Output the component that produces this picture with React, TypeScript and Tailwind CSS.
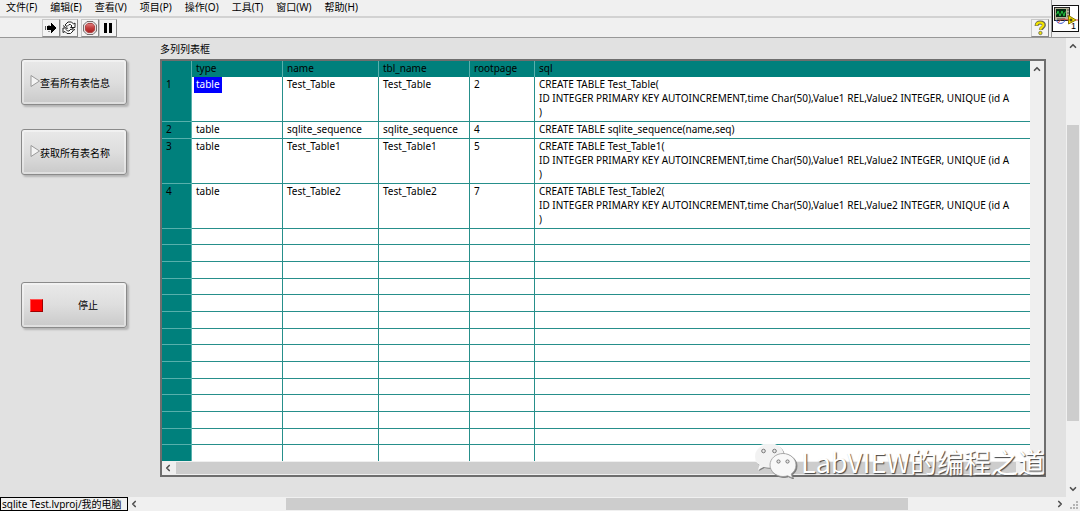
import type { ReactNode } from 'react';
import { ChevronDown, ChevronLeft, ChevronRight, ChevronUp } from 'lucide-react';

interface TableRow {
  type: string;
  name: string;
  tblName: string;
  rootpage: number;
  sql: string;
}

const MENUS = ['文件(F)', '编辑(E)', '查看(V)', '项目(P)', '操作(O)', '工具(T)', '窗口(W)', '帮助(H)'];

const COLUMNS = ['type', 'name', 'tbl_name', 'rootpage', 'sql'];

const createSql = (table: string) =>
  `CREATE TABLE ${table}(\nID INTEGER PRIMARY KEY AUTOINCREMENT,time Char(50),Value1 REL,Value2 INTEGER, UNIQUE (id A\n)`;

const ROWS: TableRow[] = [
  { type: 'table', name: 'Test_Table', tblName: 'Test_Table', rootpage: 2, sql: createSql('Test_Table') },
  {
    type: 'table',
    name: 'sqlite_sequence',
    tblName: 'sqlite_sequence',
    rootpage: 4,
    sql: 'CREATE TABLE sqlite_sequence(name,seq)',
  },
  { type: 'table', name: 'Test_Table1', tblName: 'Test_Table1', rootpage: 5, sql: createSql('Test_Table1') },
  { type: 'table', name: 'Test_Table2', tblName: 'Test_Table2', rootpage: 7, sql: createSql('Test_Table2') },
];

const EMPTY_ROWS = Array.from({ length: 14 }, (_, index) => index);

const RunIcon = () => (
  <svg viewBox="0 0 16 16" className="w-4 h-4" shapeRendering="crispEdges">
    <path d="M4 6h4V3h1v1h1v1h1v1h1v1h1v2h-1v1h-1v1h-1v1H9v1H8v-3H4z" fill="#000" />
    <path d="M2 6h1v4H2z" fill="#555" />
    <path d="M5 5h2M5 11h2" stroke="#999" />
  </svg>
);

const RunLoopIcon = () => (
  <svg viewBox="0 0 16 16" className="w-4 h-4" fill="#fff" stroke="#222" strokeWidth="1">
    <path d="M4 5l3-3h3.500l2 2L14 3v4.500h-4.500L11 6 9.500 4.500H8L6 6.500z" />
    <path d="M12.500 10.500l-3 3H6l-2-2-2 1V8h4.500L5 9.500 6.500 11H8l2-2z" />
    <path d="M2 5.500l2.500 2M14 10l-3-2" />
  </svg>
);

const AbortIcon = () => (
  <svg viewBox="0 0 16 16" className="w-4 h-4">
    <defs>
      <linearGradient id="abort-red" x1="0" y1="0" x2="0" y2="1">
        <stop offset="0" stopColor="#e08080" />
        <stop offset="0.5" stopColor="#c43c3c" />
        <stop offset="1" stopColor="#a82020" />
      </linearGradient>
    </defs>
    <path d="M5 1.500h6L14.500 5v6L11 14.500H5L1.500 11V5z" fill="#e4dcdc" stroke="#776c6c" strokeWidth="1" />
    <path d="M5.800 3.500h4.400l2.300 2.300v4.400l-2.300 2.300H5.800l-2.300-2.300V5.800z" fill="url(#abort-red)" stroke="#b04848" />
  </svg>
);

const PauseIcon = () => (
  <svg viewBox="0 0 16 16" className="w-4 h-4">
    <path d="M4 3h3v10H4zM9 3h3v10H9z" fill="#000" />
  </svg>
);

const HelpIcon = () => (
  <svg viewBox="0 0 16 16" className="w-4 h-4" fill="none">
    <path d="M4.500 6C4.500 3 6 2.500 8 2.500s4 .8 4 2.800S8.700 7.500 8.700 10" stroke="#66665a" strokeWidth="3.800" />
    <path d="M4.500 5.500C4.500 3 6 2.500 8 2.500s3.500.8 3.500 2.600S8.300 7.500 8.300 9.700" stroke="#f2e400" strokeWidth="2.200" />
    <circle cx="8.400" cy="13" r="1.700" fill="#f2e400" stroke="#66665a" strokeWidth="0.800" />
  </svg>
);

const ViIcon = () => (
  <div className="relative w-[27px] h-[27px]">
    <svg viewBox="0 0 27 27" className="w-[27px] h-[27px]">
      <rect x="0.5" y="0.5" width="26" height="26" fill="#fff" stroke="#111" />
      <rect x="2.500" y="2.500" width="15" height="13" fill="#b9b49a" stroke="#222" />
      <rect x="4" y="4" width="10" height="8" fill="#042c10" />
      <path d="M4 9h1l1-3 2 5 2-5 2 5 1-4h1" stroke="#20c040" fill="none" />
      <path d="M15 5h2M15 8h2M15 11h2M5 14h8" stroke="#444" />
      <path d="M4 15c2 5 8 4 9 0" stroke="#3050d0" fill="none" />
      <path d="M6 18c3-5 6-4 10-3" stroke="#e04040" fill="none" />
      <path d="M16.500 10.500L24 15l-7.500 4z" fill="#f5e000" stroke="#887700" />
      <path d="M24 15h2" stroke="#e04040" />
      <path d="M17.500 15h3M19 13.500v3" stroke="#222" />
    </svg>
    <span className="absolute right-[3px] bottom-0.5 text-[9px] leading-[8px] font-['Liberation_Sans',sans-serif]">1</span>
  </div>
);

const WeChatIcon = () => (
  <svg viewBox="0 0 44 36" className="w-11 h-9 mb-1 drop-shadow-[1px_1px_0px_#777777]">
    <path
      d="M16 1C7.500 1 1 6.500 1 13.500c0 4 2 7.300 5.500 9.600L5 28l5.500-3c1.800.500 3.500.800 5.500.800 8.500 0 15-5.500 15-12.300S24.500 1 16 1z"
      fill="#fff"
      fillOpacity="0.9"
    />
    <path
      d="M30 11.500c-7 0-13 5-13 11.500s6 11.500 13 11.500c1.600 0 3.200-.300 4.600-.700l4.900 2.200-1.300-4C41.300 29.800 43 26.700 43 23c0-6.500-6-11.500-13-11.500z"
      fill="#f8f8f8"
      stroke="#999"
      strokeWidth="0.800"
    />
    <g fill="#e8e8e8" stroke="#777" strokeWidth="1">
      <circle cx="10.500" cy="9" r="1.800" />
      <circle cx="21.500" cy="9" r="1.800" />
      <circle cx="25.500" cy="19.500" r="1.600" />
      <circle cx="34.500" cy="19.500" r="1.600" />
    </g>
  </svg>
);

const ToolButton = ({ label, children }: { label: string; children: ReactNode }) => (
  <button
    aria-label={label}
    className="w-[18px] h-[18px] flex items-center justify-center bg-[#f4f4f4] border border-[#c8c8c8] border-r-[#888888] border-b-[#888888]"
  >
    {children}
  </button>
);

const ScrollArrow = ({ label, children }: { label: string; children: ReactNode }) => (
  <button aria-label={label} className="w-3 h-3 shrink-0 flex items-center justify-center text-[#505050]">
    {children}
  </button>
);

const PanelButton = ({ children }: { children: ReactNode }) => (
  <button className="w-[106px] h-[46px] flex items-center rounded-[3px] border border-[#8a8a8a] bg-linear-to-b from-[#e9e9e9] from-0% via-[#dedede] via-50% to-[#c9c9c9] shadow-[inset_0_0_0_2px_#ffffff66,2px_2px_2px_#00000033]">
    {children}
  </button>
);

const PlayMark = () => (
  <svg viewBox="0 0 10 12" className="w-[10px] h-3 ml-2 mb-0.5 shrink-0">
    <path d="M1 0.500l8.500 5.500L1 11.500z" fill="#f4f4f4" stroke="#999" />
  </svg>
);

const ListBox = () => (
  <div className="flex-1 min-h-0 flex flex-col border-2 border-[#6e6e6e] bg-[#efefef]">
    <div className="flex-1 min-h-0 flex">
      <div className="flex-1 min-w-0 overflow-hidden bg-white">
        <table className="w-full table-fixed border-separate border-spacing-0 leading-[14px] whitespace-pre text-left">
          <colgroup>
            <col className="w-[30px]" />
            <col className="w-[91px]" />
            <col className="w-24" />
            <col className="w-[91px]" />
            <col className="w-[65px]" />
            <col />
          </colgroup>
          <thead className="bg-[#00807c]">
            <tr className="h-4 align-top">
              <th className="border-r border-[#58b0ac]" />
              {COLUMNS.map((column) => (
                <th key={column} className="p-0 pl-1 font-normal border-r border-[#58b0ac] last:border-r-0">
                  {column}
                </th>
              ))}
            </tr>
          </thead>
          <tbody>
            {ROWS.map((row, index) => (
              <tr
                key={row.name}
                className="align-top [&>td]:p-0 [&>td]:pl-1 [&>td]:pb-0.5 [&>td]:border-b [&>td]:border-r [&>td]:border-[#268f8b] [&>td:last-child]:border-r-0"
              >
                <th className="p-0 pl-1 font-normal bg-[#00807c] border-b border-r border-[#58b0ac]">
                  {index + 1}
                </th>
                <td>
                  {index === 0 ? (
                    <span className="block w-7 h-4 -ml-0.5 pl-0.5 bg-[#0000ff] text-white">{row.type}</span>
                  ) : (
                    row.type
                  )}
                </td>
                <td>{row.name}</td>
                <td>{row.tblName}</td>
                <td>{row.rootpage}</td>
                <td className="overflow-hidden">{row.sql}</td>
              </tr>
            ))}
            {EMPTY_ROWS.map((row) => (
              <tr key={row} className={row % 3 === 0 ? 'h-4' : 'h-[17px]'}>
                <th className="p-0 bg-[#00807c] border-b border-r border-[#58b0ac]" />
                {COLUMNS.map((column) => (
                  <td key={column} className="p-0 border-b border-r border-[#268f8b] last:border-r-0" />
                ))}
              </tr>
            ))}
          </tbody>
        </table>
      </div>
      <div className="w-[14px] flex flex-col items-center pt-0.5">
        <ScrollArrow label="列表向上滚动">
          <ChevronUp className="w-[10px] h-[10px] stroke-[4px]" />
        </ScrollArrow>
      </div>
    </div>
    <div className="h-[14px] flex items-center">
      <ScrollArrow label="列表向左滚动">
        <ChevronLeft className="w-[10px] h-[10px] stroke-[4px]" />
      </ScrollArrow>
      <div className="h-3 flex-1 ml-0.5 mr-7 bg-[#cdcdcd]" />
    </div>
  </div>
);

export default function App() {
  return (
    <div className="relative h-screen flex flex-col overflow-hidden bg-[#e1e1e1] text-black text-[10px] leading-[14px] font-['Noto_Sans','Noto_Sans_CJK_SC',sans-serif]">
      <header className="flex bg-[#f0f0f0] border-b border-[#989898]">
        <div className="flex-1">
          <nav className="h-[18px] flex items-center gap-[13px] pl-[6px] pb-0.5 border-b-2 border-[#d2d2d2]">
            {MENUS.map((menu) => (
              <button key={menu} className="leading-[14px]">
                {menu}
              </button>
            ))}
          </nav>
          <div className="h-[19px] flex items-center pl-[42px] pr-[2px]">
            <ToolButton label="运行">
              <RunIcon />
            </ToolButton>
            <ToolButton label="连续运行">
              <RunLoopIcon />
            </ToolButton>
            <div className="w-[3px]" />
            <ToolButton label="中止执行">
              <AbortIcon />
            </ToolButton>
            <ToolButton label="暂停">
              <PauseIcon />
            </ToolButton>
            <div className="flex-1" />
            <ToolButton label="帮助">
              <HelpIcon />
            </ToolButton>
          </div>
        </div>
        <div className="w-[29px] pt-[5px] border-l border-[#989898]">
          <ViIcon />
        </div>
      </header>

      <div className="flex-1 min-h-0 flex">
        <main className="flex-1 min-w-0 flex pt-1 pr-5 pb-5">
          <div className="w-40 shrink-0 pl-[21px] pt-[17px] flex flex-col gap-6">
            <PanelButton>
              <PlayMark />
              <span className="pt-0.5">查看所有表信息</span>
            </PanelButton>
            <PanelButton>
              <PlayMark />
              <span className="pt-0.5">获取所有表名称</span>
            </PanelButton>
            <div className="pt-[83px]">
              <PanelButton>
                <span className="w-[13px] h-[13px] ml-2 bg-[#ff0000] border border-[#ff5050] border-r-[#a00000] border-b-[#a00000]" />
                <span className="ml-[35px]">停止</span>
              </PanelButton>
            </div>
          </div>
          <section className="flex-1 min-w-0 flex flex-col">
            <h2 className="h-[17px]">多列列表框</h2>
            <ListBox />
          </section>
        </main>
        <div className="w-[14px] flex flex-col items-center py-0.5 bg-[#f0f0f0]">
          <ScrollArrow label="向上滚动">
            <ChevronUp className="w-[10px] h-[10px] stroke-[4px]" />
          </ScrollArrow>
          <div className="flex-1 w-full flex flex-col pl-px pr-px">
            <div className="grow-[73]" />
            <div className="grow-[295] bg-[#cdcdcd]" />
            <div className="grow-[62]" />
          </div>
          <ScrollArrow label="向下滚动">
            <ChevronDown className="w-[10px] h-[10px] stroke-[4px]" />
          </ScrollArrow>
        </div>
      </div>

      <footer className="h-[14px] flex items-center bg-[#f0f0f0]">
        <div className="w-32 h-[14px] border border-black pl-px leading-3 whitespace-nowrap">
          sqlite Test.lvproj/我的电脑
        </div>
        <ScrollArrow label="向左滚动">
          <ChevronLeft className="w-[10px] h-[10px] stroke-[4px]" />
        </ScrollArrow>
        <div className="flex-1 h-3 flex">
          <div className="grow-[146]" />
          <div className="grow-[621] bg-[#cdcdcd]" />
          <div className="grow-[146]" />
        </div>
        <ScrollArrow label="向右滚动">
          <ChevronRight className="w-[10px] h-[10px] stroke-[4px]" />
        </ScrollArrow>
        <svg viewBox="0 0 14 14" className="w-[14px] h-[14px]" fill="#b4b4b4">
          <path d="M10 4h2v2h-2zM7 7h2v2H7zM10 7h2v2h-2zM4 10h2v2H4zM7 10h2v2H7zM10 10h2v2h-2z" />
        </svg>
      </footer>

      <div className="absolute right-[35px] bottom-[29px] flex items-center gap-1 text-[27px] leading-10 text-white font-['Noto_Sans_CJK_SC',sans-serif] [text-shadow:1px_1px_1px_#444444]">
        <WeChatIcon />
        <span>LabVIEW的编程之道</span>
      </div>
    </div>
  );
}
